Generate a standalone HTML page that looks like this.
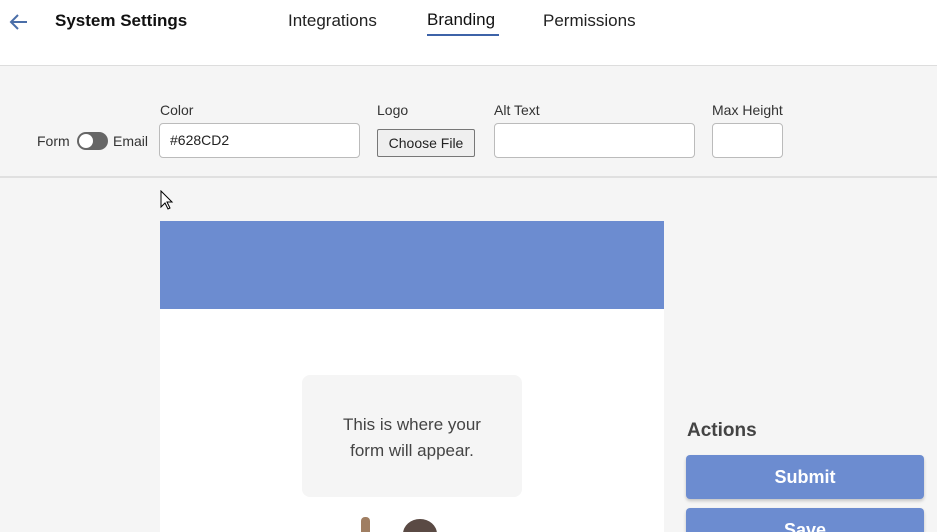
<!DOCTYPE html>
<html style="width:937px;height:532px;overflow:hidden"><head><meta charset="utf-8"><style>
*{box-sizing:border-box;margin:0;padding:0}
body{width:937px;height:532px;overflow:hidden;background:#f5f5f5;font-family:"Liberation Sans",sans-serif;position:relative;color:#222}
.hdr{position:absolute;left:0;top:0;width:937px;height:66px;background:#fff;border-bottom:1px solid #ddd}
.a{position:absolute}
.tb{position:absolute;top:66px;left:0;width:937px;height:112px;background:#f5f5f5;border-bottom:2px solid #e0e0e0}
.lbl{font-size:14px;color:#333}
.inp{position:absolute;background:#fff;border:1px solid #bbb;border-radius:4px;height:35px;font-size:14px;padding:8px 10px;color:#222}
.btn{position:absolute;left:686px;width:238px;height:44px;background:#6c8cd0;border-radius:4px;color:#fff;font-weight:bold;font-size:18px;text-align:center;line-height:44px;box-shadow:0 2px 3px rgba(0,0,0,.2)}
</style></head><body>
<div class="hdr">
<svg class="a" style="left:8px;top:11px" width="22" height="22" viewBox="0 0 22 22"><path d="M19 11H4M10 4L3 11l7 7" stroke="#4a6ea8" stroke-width="2" fill="none"/></svg>
<div class="a" style="left:55px;top:11px;font-size:17px;font-weight:bold;color:#111">System Settings</div>
<div class="a" style="left:288px;top:11px;font-size:17px;color:#222">Integrations</div>
<div class="a" style="left:427px;top:10px;font-size:17px;color:#111">Branding</div>
<div class="a" style="left:427px;top:34px;width:72px;height:2px;background:#3d63a8"></div>
<div class="a" style="left:543px;top:11px;font-size:17px;color:#222">Permissions</div>
</div>
<div class="tb">
<div class="a lbl" style="left:37px;top:67px">Form</div>
<div class="a" style="left:77px;top:66px;width:31px;height:18px;border-radius:9px;background:#666"></div>
<div class="a" style="left:79px;top:68px;width:14px;height:14px;border-radius:50%;background:#fff"></div>
<div class="a lbl" style="left:113px;top:67px">Email</div>
<div class="a lbl" style="left:160px;top:36px">Color</div>
<div class="inp" style="left:159px;top:57px;width:201px">#628CD2</div>
<div class="a lbl" style="left:377px;top:36px">Logo</div>
<div class="a" style="left:377px;top:63px;width:98px;height:28px;background:#efefef;border:1px solid #777;border-radius:2px;font-size:14px;text-align:center;line-height:26px">Choose File</div>
<div class="a lbl" style="left:494px;top:36px">Alt Text</div>
<div class="inp" style="left:494px;top:57px;width:201px"></div>
<div class="a lbl" style="left:712px;top:36px">Max Height</div>
<div class="inp" style="left:712px;top:57px;width:71px"></div>
</div>
<svg class="a" style="left:160px;top:190px" width="14" height="22" viewBox="0 0 14 22"><path d="M1 1v16l4-4 3 6 2-1-3-6h5z" fill="#fff" stroke="#000" stroke-width="1"/></svg>
<div class="a" style="left:160px;top:221px;width:504px;height:88px;background:#6c8cd0"></div>
<div class="a" style="left:160px;top:309px;width:504px;height:223px;background:#fff;overflow:hidden">
<div class="a" style="left:142px;top:66px;width:220px;height:122px;background:#f5f5f5;border-radius:8px;font-size:17px;color:#444;text-align:center;padding-top:37px;line-height:26px">This is where your<br>form will appear.</div>
<div class="a" style="left:201px;top:208px;width:9px;height:20px;background:#a07e62;border-radius:4px 4px 0 0"></div>
<div class="a" style="left:243px;top:210px;width:34px;height:30px;background:#5a4a44;border-radius:50%"></div>
</div>
<div class="a" style="left:687px;top:420px;font-size:19px;font-weight:bold;color:#444">Actions</div>
<div class="btn" style="top:455px">Submit</div>
<div class="btn" style="top:508px;height:24px;border-radius:4px 4px 0 0;line-height:44px;overflow:hidden">Save</div>
</body></html>
